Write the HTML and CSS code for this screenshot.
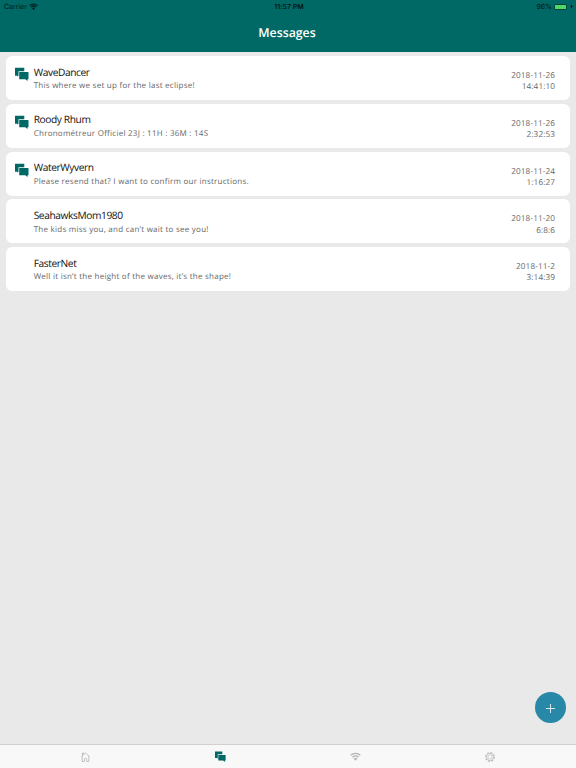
FILE: index.html
```
<!DOCTYPE html>
<html lang="en">
<head>
    <meta charset="UTF-8">
    <meta name="viewport" content="width=device-width, initial-scale=1.0">
    <title>Messages</title>
    <link rel="stylesheet" href="styles.css">
</head>
<body>
    <svg class="sprite" width="0" height="0">
        <symbol id="chat" viewBox="0 0 14 14">
            <path d="M0 .7h9.300v3.500H3.500v4.600l-1 1v-1H0z"/>
            <path d="M4.200 5h9.300v7.200h-1v1.700l-2.200-1.700H4.200z"/>
        </symbol>
        <symbol id="wifi" viewBox="0 0 24 18">
            <path class="line" d="M1.500 6.500a15 15 0 0 1 21 0M5.500 10.700a9.200 9.200 0 0 1 13 0" stroke="currentColor" stroke-width="3"/>
            <path d="M8 13.800a5.600 5.600 0 0 1 8 0L12 18z"/>
        </symbol>
    </svg>

    <header class="header">
        <div class="status-bar">
            <div class="status-left">
                <span>Carrier</span>
                <svg class="status-wifi"><use href="#wifi"/></svg>
            </div>
            <div class="status-time">11:57 PM</div>
            <div class="status-right">
                <span>96%</span>
                <span class="battery"></span>
                <svg class="bolt" viewBox="0 0 4 6"><path d="M2.600 0L0 3.400h1.600L1.200 6L4 2.400H2.300z"/></svg>
            </div>
        </div>
        <h1>Messages</h1>
    </header>

    <main class="messages">
        <div class="card">
            <svg class="unread"><use href="#chat"/></svg>
            <div class="text">
                <h2>WaveDancer</h2>
                <p>This where we set up for the last eclipse!</p>
            </div>
            <div class="date">2018-11-26<br>14:41:10</div>
        </div>
        <div class="card">
            <svg class="unread"><use href="#chat"/></svg>
            <div class="text">
                <h2>Roody Rhum</h2>
                <p>Chronométreur Officiel 23J : 11H : 36M : 14S</p>
            </div>
            <div class="date">2018-11-26<br>2:32:53</div>
        </div>
        <div class="card">
            <svg class="unread"><use href="#chat"/></svg>
            <div class="text">
                <h2>WaterWyvern</h2>
                <p>Please resend that? I want to confirm our instructions.</p>
            </div>
            <div class="date">2018-11-24<br>1:16:27</div>
        </div>
        <div class="card">
            <div class="text">
                <h2>SeahawksMom1980</h2>
                <p>The kids miss you, and can’t wait to see you!</p>
            </div>
            <div class="date">2018-11-20<br>6:8:6</div>
        </div>
        <div class="card">
            <div class="text">
                <h2>FasterNet</h2>
                <p>Well it isn’t the height of the waves, it’s the shape!</p>
            </div>
            <div class="date">2018-11-2<br>3:14:39</div>
        </div>
    </main>

    <button class="add-button" aria-label="New message"></button>

    <nav class="tab-bar">
        <a class="tab">
            <svg class="tab-home line" viewBox="0 0 10 11" stroke="currentColor">
                <path d="M.5 5L5 1l4.500 4M1.300 4.500v6h2.400v-3q1.300-1.600 2.600 0v3h2.400v-6M1.500 3.500V1h1.200v1.500"/>
            </svg>
        </a>
        <a class="tab active"><svg class="tab-chat"><use href="#chat"/></svg></a>
        <a class="tab"><svg class="tab-wifi"><use href="#wifi"/></svg></a>
        <a class="tab">
            <svg class="tab-gear line" viewBox="0 0 10 10" stroke="currentColor">
                <circle cx="5" cy="5" r="2.200" stroke-width=".6"/>
                <circle cx="5" cy="5" r="3.700" stroke-width=".7"/>
                <circle cx="5" cy="5" r="4.400" stroke-width="1.100" stroke-dasharray="1.728"/>
            </svg>
        </a>
    </nav>
</body>
</html>
```
FILE: styles.css
```
* {
    box-sizing: border-box;
}

body {
    margin: 0;
    height: 768px;
    display: flex;
    flex-direction: column;
    overflow: hidden;
    background-color: #e9e9e9;
    font-family: "Open Sans", sans-serif;
    text-rendering: geometricPrecision;
}

svg {
    display: block;
    fill: currentColor;
}

.line {
    fill: none;
}

.sprite {
    position: absolute;
}

h1, h2, p {
    margin: 0;
    font-weight: normal;
}

.header {
    height: 52px;
    background-color: #006965;
}

.status-bar {
    display: grid;
    grid-template-columns: 1fr auto 1fr;
    align-items: center;
    height: 12px;
    padding: 0 3px 0 4px;
    color: #001514;
    font-family: Inter, "Liberation Sans", sans-serif;
    font-size: 7px;
    line-height: 12px;
}

.status-bar span:not(.battery),
.status-time {
    padding-top: 1px;
}

.status-left,
.status-right {
    display: flex;
    align-items: center;
}

.status-left {
    gap: 2px;
}

.status-wifi {
    width: 9px;
    height: 7px;
}

.status-time {
    font-weight: 600;
    letter-spacing: 0.050px;
    text-indent: 1px;
}

.status-right {
    justify-content: flex-end;
    gap: 2px;
}

.battery {
    width: 13px;
    height: 6px;
    border: 1px solid #00413c;
    border-radius: 1px;
    background-color: #4cd964;
}

.bolt {
    width: 3px;
    height: 5px;
    margin-left: 1px;
}

.header h1 {
    margin-top: 11px;
    color: #fff;
    font-size: 12.300px;
    font-weight: 600;
    line-height: 19px;
    text-align: center;
    text-indent: -2px;
}

.messages {
    flex: 1;
    display: flex;
    flex-direction: column;
    gap: 3.750px;
    padding: 4px 6px;
}

.card {
    display: flex;
    height: 44px;
    padding: 0 15px 0 9px;
    border-radius: 6px;
    background-color: #fff;
}

.unread {
    width: 14px;
    height: 14px;
    margin: 11px -14px 0 0;
    color: #006965;
}

.text {
    flex: 1;
    padding: 8.700px 0 0 18.700px;
}

.text h2 {
    color: #111;
    font-size: 10.200px;
    line-height: 14px;
    letter-spacing: -0.400px;
}

.text p {
    margin-top: 0.800px;
    color: #666;
    font-size: 8px;
    line-height: 13px;
    letter-spacing: 0.250px;
}

.date {
    padding-top: 14px;
    color: #666;
    font-size: 8.200px;
    line-height: 11.300px;
    letter-spacing: 0.100px;
    text-align: right;
}

.add-button {
    position: absolute;
    right: 10px;
    bottom: 45px;
    width: 31px;
    height: 31px;
    padding: 0;
    border: none;
    border-radius: 50%;
    background-color: #2788a8;
}

.add-button::before,
.add-button::after {
    content: "";
    position: absolute;
    top: 16px;
    left: 11px;
    width: 9px;
    height: 1px;
    background-color: #d5e8ee;
}

.add-button::after {
    transform: rotate(90deg);
}

.tab-bar {
    display: flex;
    justify-content: center;
    height: 24px;
    border-top: 1px solid #d0d0d0;
    background-color: #f8f8f8;
}

.tab {
    width: 134.800px;
    display: flex;
    align-items: center;
    justify-content: center;
    color: #b5b5b5;
}

.tab.active {
    color: #006965;
}

.tab-home {
    width: 9px;
    height: 10px;
    stroke-width: 0.9;
}

.tab-chat {
    width: 11px;
    height: 11px;
}

.tab-wifi {
    width: 11px;
    height: 9px;
}

.tab-gear {
    width: 10px;
    height: 10px;
}
```
